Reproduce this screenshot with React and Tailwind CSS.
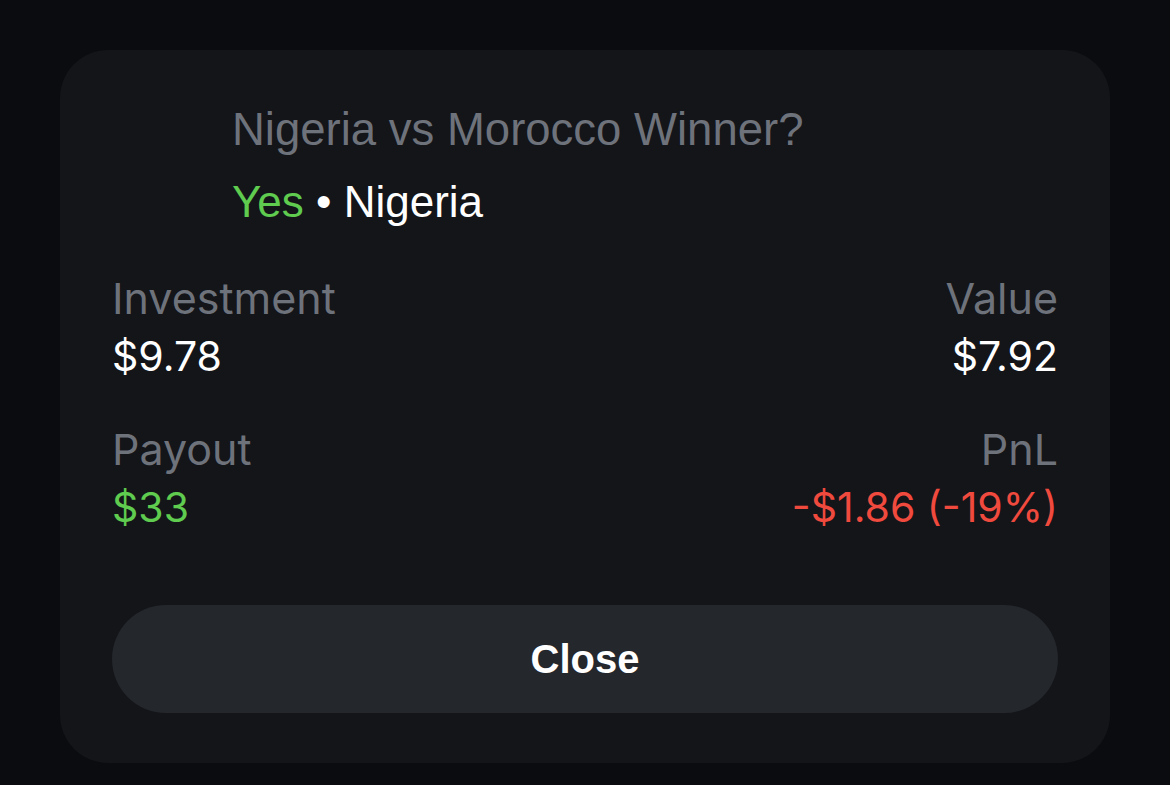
import React from "react";

function Stat({ label, value, valueClass = "text-white", align = "left" }) {
  return (
    <div className={align === "right" ? "flex flex-col items-end" : "flex flex-col items-start"}>
      <span className="font-['Inter',sans-serif] text-[43px] leading-[48px] text-[#6e727b]">{label}</span>
      <span className={`font-['Inter',sans-serif] text-[41px] leading-[48px] mt-[10px] ${valueClass}`}>{value}</span>
    </div>
  );
}

export default function App() {
  return (
    <div
      className="min-h-screen w-full bg-[#0a0c10] pt-[50px] px-[60px]"
      style={{ fontFamily: '"Liberation Sans", Arial, sans-serif' }}
    >
      <div className="w-[1050px] h-[713px] rounded-[48px] bg-[#131519] px-[52px] pt-[52px] flex flex-col">
        {/* header */}
        <div className="flex gap-[24px]">
          <div className="w-[96px] h-[96px] shrink-0" />
          <div className="flex flex-col">
            <span className="text-[45.5px] leading-[56px] text-[#6e727b]">Nigeria vs Morocco Winner?</span>
            <span className="text-[44px] leading-[56px] mt-[16px] text-white">
              <span className="text-[#5fcb4f]">Yes</span> • Nigeria
            </span>
          </div>
        </div>

        {/* stats */}
        <div className="grid grid-cols-2 gap-y-[45px] mt-[44px]">
          <Stat label="Investment" value="$9.78" />
          <Stat label="Value" value="$7.92" align="right" />
          <Stat label="Payout" value="$33" valueClass="text-[#5fcb4f]" />
          <Stat label="PnL" value="-$1.86 (-19%)" valueClass="text-[#f04a3e]" align="right" />
        </div>

        <button className="mt-[74px] h-[108px] w-full rounded-full bg-[#24272c] text-white text-[40px] font-bold">
          Close
        </button>
      </div>
    </div>
  );
}
